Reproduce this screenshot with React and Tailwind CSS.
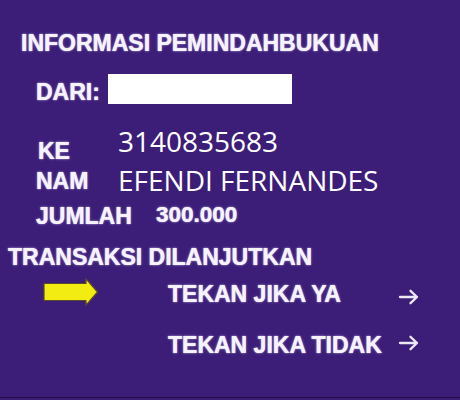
import React from 'react';

const glow = '[text-shadow:0_0_1px_#e6defc,0_0_3px_rgba(214,200,255,0.5)] [-webkit-text-stroke:0.2px_#f6f3fc]';

// thin right arrow used beside the options
const SmallArrow = () => (
    <svg width="22" height="16" viewBox="0 0 22 16" fill="none" stroke="#ece8f8" strokeWidth="2.3" strokeLinecap="round" strokeLinejoin="round">
        <path d="M2 8h17M12.5 1.8L19 8l-6.5 6.2" />
    </svg>
);

const YellowArrow = () => (
    <svg width="56" height="28" viewBox="0 0 56 28">
        <path d="M1 5.5h42V0.8L54.5 14 43 27.2V22.5H1z" fill="#f2ec12" stroke="#5b4a2a" strokeWidth="1.2" strokeLinejoin="round" />
    </svg>
);

const App = () => {
    const bold = `font-['Liberation_Sans',Arial,sans-serif] font-bold text-[#f6f3fc] ${glow}`;
    const light = "font-['Open_Sans','Noto_Sans',sans-serif] text-white";

    return (
        <div className="w-[460px] h-[400px] bg-[#3c1e78] flex flex-col overflow-hidden">
            {/* Header */}
            <div className={`${bold} text-[23px] leading-[23px] pl-[21px] mt-[32px]`}>
                INFORMASI PEMINDAHBUKUAN
            </div>

            {/* Dari */}
            <div className="flex items-end h-[30px] mt-[19px]">
                <div className={`${bold} text-[23px] leading-[23px] pl-[36px] w-[108px]`}>DARI:</div>
                <div className="w-[184px] h-[30px] bg-white" />
            </div>

            {/* Ke */}
            <div className="flex items-start h-[35px] mt-[23px]">
                <div className={`${bold} text-[23px] leading-[23px] pl-[38px] w-[118px] mt-[13px]`}>KE</div>
                <div className={`${light} text-[28px] leading-[28px]`}>3140835683</div>
            </div>

            {/* Nama */}
            <div className="flex items-start h-[33px]">
                <div className={`${bold} text-[23px] leading-[23px] pl-[36px] w-[118px] mt-[8px]`}>NAM</div>
                <div className={`${light} text-[28px] leading-[28px] mt-[4px]`}>EFENDI FERNANDES</div>
            </div>

            {/* Jumlah */}
            <div className="flex items-start h-[32px]">
                <div className={`${bold} text-[23px] leading-[23px] pl-[36px] w-[156px] mt-[10px]`}>JUMLAH</div>
                <div className={`${bold} text-[22.5px] leading-[23px] mt-[8px]`}>300.000</div>
            </div>

            {/* Transaksi */}
            <div className={`${bold} text-[23px] leading-[23px] pl-[8px] mt-[19px]`}>
                TRANSAKSI DILANJUTKAN
            </div>

            {/* Options */}
            <div className="flex items-start h-[28px] mt-[9px]">
                <div className="pl-[43px] w-[168px]">
                    <YellowArrow />
                </div>
                <div className={`${bold} text-[23px] leading-[23px] w-[230px] mt-[5px]`}>TEKAN JIKA YA</div>
                <div className="mt-[11px]">
                    <SmallArrow />
                </div>
            </div>

            <div className="flex items-start h-[23px] mt-[28px]">
                <div className={`${bold} text-[23px] leading-[23px] pl-[168px] w-[398px]`}>TEKAN JIKA TIDAK</div>
                <div className="mt-[1px]">
                    <SmallArrow />
                </div>
            </div>

            <div className="mt-auto mb-[2px] h-[1px] bg-[#1f0f45]" />
        </div>
    );
};

export default App;
